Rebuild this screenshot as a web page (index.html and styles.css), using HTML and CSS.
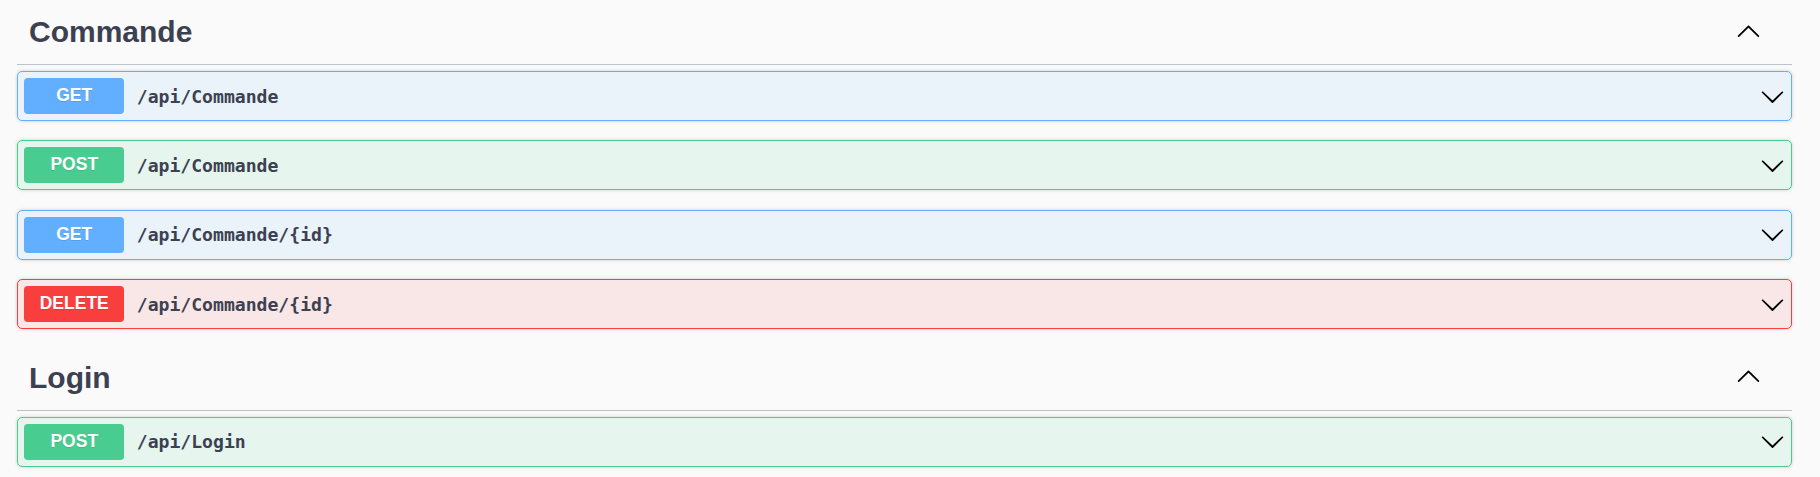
FILE: index.html
```html
<!DOCTYPE html>
<html lang="fr">
<head>
<meta charset="utf-8">
<title>Swagger UI</title>
<link rel="stylesheet" href="styles.css">
</head>
<body>
<div class="wrapper">
  <section class="tag-section">
    <h3 class="tag-heading">
      <span class="tag-name">Commande</span>
      <button class="expand" type="button" aria-label="collapse">
        <svg viewBox="0 0 20 20" width="25" height="25"><path d="M17.418 14.908c.272.268.709.268.979 0s.271-.701 0-.969l-7.908-7.83c-.27-.268-.707-.268-.979 0l-7.908 7.83c-.27.268-.27.701 0 .969.271.268.709.268.979 0L10 7.767l7.418 7.141z"/></svg>
      </button>
    </h3>
    <div class="ops">
      <div class="op op-get">
        <div class="summary">
          <span class="method">GET</span>
          <span class="path">/api/Commande</span>
          <svg class="arrow" viewBox="0 0 20 20" width="25" height="25"><path d="M17.418 6.109c.272-.268.709-.268.979 0s.271.701 0 .969l-7.908 7.83c-.27.268-.707.268-.979 0l-7.908-7.83c-.27-.268-.27-.701 0-.969.271-.268.709-.268.979 0L10 13.25l7.418-7.141z"/></svg>
        </div>
      </div>
      <div class="op op-post">
        <div class="summary">
          <span class="method">POST</span>
          <span class="path">/api/Commande</span>
          <svg class="arrow" viewBox="0 0 20 20" width="25" height="25"><path d="M17.418 6.109c.272-.268.709-.268.979 0s.271.701 0 .969l-7.908 7.83c-.27.268-.707.268-.979 0l-7.908-7.83c-.27-.268-.27-.701 0-.969.271-.268.709-.268.979 0L10 13.25l7.418-7.141z"/></svg>
        </div>
      </div>
      <div class="op op-get">
        <div class="summary">
          <span class="method">GET</span>
          <span class="path">/api/Commande/{id}</span>
          <svg class="arrow" viewBox="0 0 20 20" width="25" height="25"><path d="M17.418 6.109c.272-.268.709-.268.979 0s.271.701 0 .969l-7.908 7.83c-.27.268-.707.268-.979 0l-7.908-7.83c-.27-.268-.27-.701 0-.969.271-.268.709-.268.979 0L10 13.25l7.418-7.141z"/></svg>
        </div>
      </div>
      <div class="op op-delete">
        <div class="summary">
          <span class="method">DELETE</span>
          <span class="path">/api/Commande/{id}</span>
          <svg class="arrow" viewBox="0 0 20 20" width="25" height="25"><path d="M17.418 6.109c.272-.268.709-.268.979 0s.271.701 0 .969l-7.908 7.83c-.27.268-.707.268-.979 0l-7.908-7.83c-.27-.268-.27-.701 0-.969.271-.268.709-.268.979 0L10 13.25l7.418-7.141z"/></svg>
        </div>
      </div>
    </div>
  </section>
  <section class="tag-section">
    <h3 class="tag-heading">
      <span class="tag-name">Login</span>
      <button class="expand" type="button" aria-label="collapse">
        <svg viewBox="0 0 20 20" width="25" height="25"><path d="M17.418 14.908c.272.268.709.268.979 0s.271-.701 0-.969l-7.908-7.83c-.27-.268-.707-.268-.979 0l-7.908 7.83c-.27.268-.27.701 0 .969.271.268.709.268.979 0L10 7.767l7.418 7.141z"/></svg>
      </button>
    </h3>
    <div class="ops">
      <div class="op op-post">
        <div class="summary">
          <span class="method">POST</span>
          <span class="path">/api/Login</span>
          <svg class="arrow" viewBox="0 0 20 20" width="25" height="25"><path d="M17.418 6.109c.272-.268.709-.268.979 0s.271.701 0 .969l-7.908 7.83c-.27.268-.707.268-.979 0l-7.908-7.83c-.27-.268-.27-.701 0-.969.271-.268.709-.268.979 0L10 13.25l7.418-7.141z"/></svg>
        </div>
      </div>
    </div>
  </section>
</div>
</body>
</html>
```

FILE: styles.css
```css
html, body {
  margin: 0;
  padding: 0;
  background: #fafafa;
}

body {
  font-family: "Liberation Sans", Arial, sans-serif;
  color: #3b4151;
  overflow: hidden;
}

.wrapper {
  padding: 3px 28px 0 17px;
}

.tag-section {
  display: flex;
  flex-direction: column;
}

.tag-heading {
  display: flex;
  align-items: flex-start;
  margin: 0;
  padding: 11px 31.5px 14px 12px;
  border-bottom: 1px solid rgba(59, 65, 81, 0.3);
  font-size: 30px;
  line-height: 36px;
  font-weight: 700;
  color: #3b4151;
}

.tag-name {
  flex: 1;
}

.expand {
  display: flex;
  margin: 3.6px 0 0 0;
  padding: 0;
  border: none;
  background: none;
  cursor: pointer;
}

.expand svg,
.arrow {
  display: block;
  fill: #000;
  flex: none;
}

.ops {
  display: flex;
  flex-direction: column;
  padding-top: 6px;
}

.op {
  border: 1px solid;
  border-radius: 5px;
  box-shadow: 0 0 3.75px rgba(0, 0, 0, 0.19);
  margin-bottom: 19.4px;
}

.summary {
  display: flex;
  align-items: center;
  padding: 6px 6px 6px 6.25px;
}

.method {
  flex: none;
  box-sizing: border-box;
  width: 100px;
  height: 36px;
  padding-bottom: 2px;
  line-height: 34px;
  border-radius: 3.75px;
  text-align: center;
  font-family: "Liberation Sans", Arial, sans-serif;
  font-size: 17.5px;
  font-weight: 700;
  color: #fff;
  text-shadow: 0 1px 0 rgba(0, 0, 0, 0.1);
}

.path {
  flex: 1;
  padding: 0 12.5px;
  font-family: "DejaVu Sans Mono", "Liberation Mono", monospace;
  font-size: 18.1px;
  font-weight: 700;
  color: #3b4151;
}

.op-get {
  border-color: #61affe;
  background: rgba(97, 175, 254, 0.1);
}
.op-get .method {
  background: #61affe;
}

.op-post {
  border-color: #49cc90;
  background: rgba(73, 204, 144, 0.1);
}
.op-post .method {
  background: #49cc90;
}

.op-delete {
  border-color: #f93e3e;
  background: rgba(249, 62, 62, 0.1);
}
.op-delete .method {
  background: #f93e3e;
}
```
